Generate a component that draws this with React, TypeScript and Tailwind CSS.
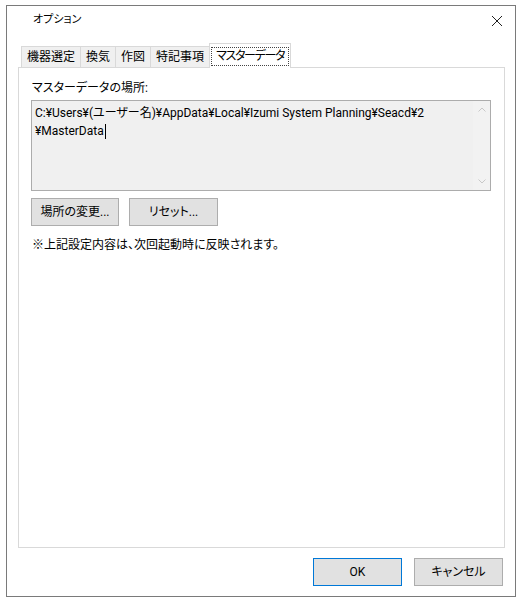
const jp = "[font-family:Roboto,'Noto_Sans_CJK_JP',sans-serif] [font-feature-settings:'palt']"

const tabs = ["機器選定", "換気", "作図", "特記事項"]

const Button = ({ label, primary, className = "" }: { label: string; primary?: boolean; className?: string }) => (
  <button
    className={`flex h-[28px] items-center justify-center border bg-[#e1e1e1] text-[12px] text-black ${
      primary ? "border-[#0078d7]" : "border-[#adadad]"
    } ${className}`}
  >
    {label}
  </button>
)

export default function App() {
  return (
    <div className={`h-[603px] w-[524px] bg-white pl-[6px] pt-[5px] text-black ${jp}`}>
      <div className="flex h-[592px] w-[510px] flex-col border border-[#7a7a7a] bg-white">
        {/* title bar */}
        <div className="flex h-[29px] items-center justify-between pl-[26px] pr-[11px]">
          <span className="text-[11px]">オプション</span>
          <svg width="12" height="12" viewBox="0 0 12 12" className="mr-[1px]">
            <path d="M1 1 L11 11 M11 1 L1 11" stroke="#222" strokeWidth="1" />
          </svg>
        </div>

        {/* tabs */}
        <div className="mt-[8px] flex h-[24px] items-end pl-[14px]">
          {tabs.map((t) => (
            <div
              key={t}
              className="-mr-px flex h-[21px] items-center border border-b-0 border-[#d9d9d9] bg-[#f0f0f0] px-[5px] text-[12px]"
            >
              {t}
            </div>
          ))}
          <div className="relative z-10 -mb-px flex h-[25px] items-center border border-b-0 border-[#d9d9d9] bg-white px-px text-[12px]">
            <span className="border border-dotted border-[#444] px-[4px] leading-[17px] tracking-[-1.3px]">マスターデータ</span>
          </div>
        </div>

        {/* panel */}
        <div className="ml-[11px] flex h-[481px] w-[487px] flex-col border border-[#d9d9d9] bg-white pl-[12px] pt-[12px]">
          <div className="pl-px text-[12px] leading-[16px]">マスターデータの場所:</div>
          <div className="mt-[4px] flex h-[91px] w-[460px] border border-[#acacac] bg-[#f0f0f0]">
            <div className="flex-1 pl-[3px] pt-[3px] text-[12px] leading-[18px]">
              <div>C:¥Users¥(ユーザー名)¥AppData¥Local¥Izumi System Planning¥Seacd¥2</div>
              <div className="flex items-center">
                ¥MasterData<span className="ml-px inline-block h-[15px] w-px bg-black" />
              </div>
            </div>
            <div className="flex w-[17px] flex-col items-center justify-between bg-[#f2f2f2] py-[6px]">
              <svg width="8" height="5" viewBox="0 0 8 5">
                <path d="M0.5 4.5 L4 1 L7.5 4.5" fill="none" stroke="#c8c8c8" />
              </svg>
              <svg width="8" height="5" viewBox="0 0 8 5">
                <path d="M0.5 0.5 L4 4 L7.5 0.5" fill="none" stroke="#c8c8c8" />
              </svg>
            </div>
          </div>
          <div className="mt-[7px] flex gap-[10px]">
            <Button label="場所の変更..." className="w-[88px]" />
            <Button label="リセット..." className="w-[89px]" />
          </div>
          <div className="mt-[11px] pl-px text-[12px] leading-[16px]">※上記設定内容は、次回起動時に反映されます。</div>
        </div>

        {/* footer */}
        <div className="mt-[10px] flex justify-end gap-[12px] pr-[12px]">
          <Button label="OK" primary className="w-[89px]" />
          <Button label="キャンセル" className="w-[89px]" />
        </div>
      </div>
    </div>
  )
}
